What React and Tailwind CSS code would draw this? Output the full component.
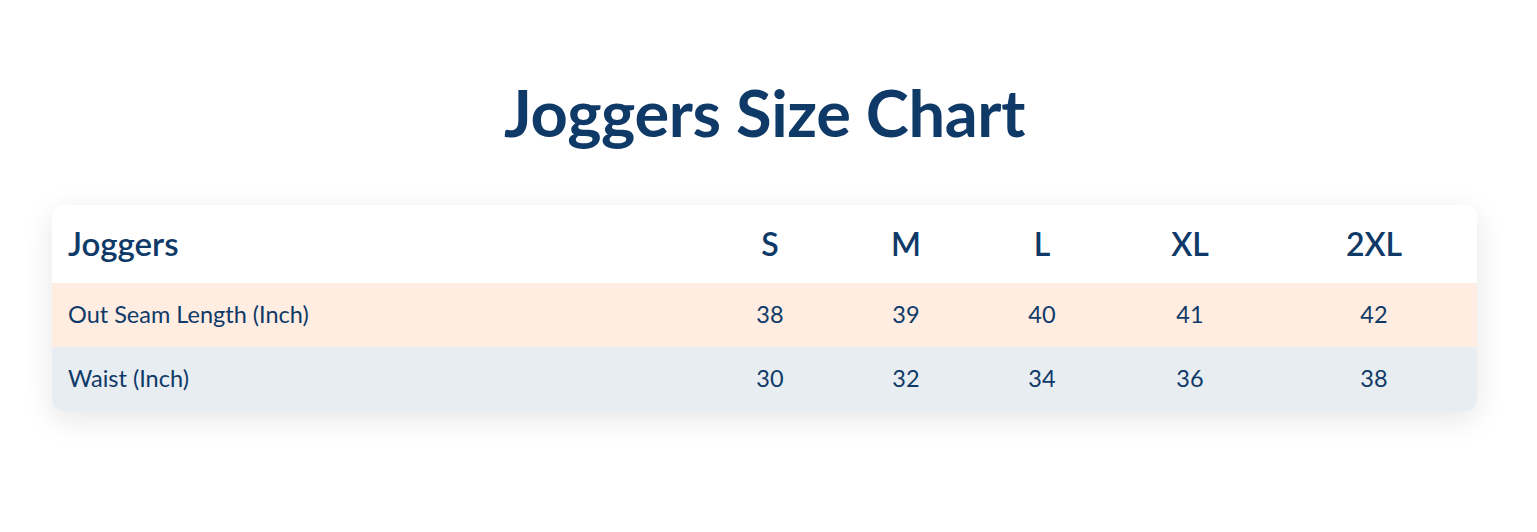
import React from 'react';

const sizes = ['S', 'M', 'L', 'XL', '2XL'];

const rows = [
  { label: 'Out Seam Length (Inch)', values: [38, 39, 40, 41, 42], bg: 'bg-[#ffede1]' },
  { label: 'Waist (Inch)', values: [30, 32, 34, 36, 38], bg: 'bg-[#e8edf1]' },
];

const App = () => {
  return (
    <div className="min-h-[532px] bg-white pl-[52px] pr-[60px] pt-[72px] text-[#0f3a68] font-['Lato','Liberation_Sans',sans-serif]">
      <h1 className="text-center text-[65px] font-bold leading-[80px] tracking-[-0.4px]">Joggers Size Chart</h1>

      <div className="mt-[53px] rounded-xl bg-white shadow-[0_8px_30px_rgba(0,0,0,0.1)] overflow-hidden">
        <table className="w-full table-fixed border-collapse">
          <colgroup>
            <col className="w-[651px]" />
            <col className="w-[134px]" />
            <col className="w-[138px]" />
            <col className="w-[134px]" />
            <col className="w-[162px]" />
            <col />
          </colgroup>
          <thead>
            <tr className="h-[78px]">
              <th className="pl-4 text-left text-[33px] font-semibold">Joggers</th>
              {sizes.map((s) => (
                <th key={s} className="text-center text-[32px] font-semibold">{s}</th>
              ))}
            </tr>
          </thead>
          <tbody>
            {rows.map((row) => (
              <tr key={row.label} className={`h-[64px] ${row.bg}`}>
                <td className="pl-4 text-left text-[23.5px]">{row.label}</td>
                {row.values.map((v, i) => (
                  <td key={i} className="text-center text-[23.5px]">{v}</td>
                ))}
              </tr>
            ))}
          </tbody>
        </table>
      </div>
    </div>
  );
};

export default App;
